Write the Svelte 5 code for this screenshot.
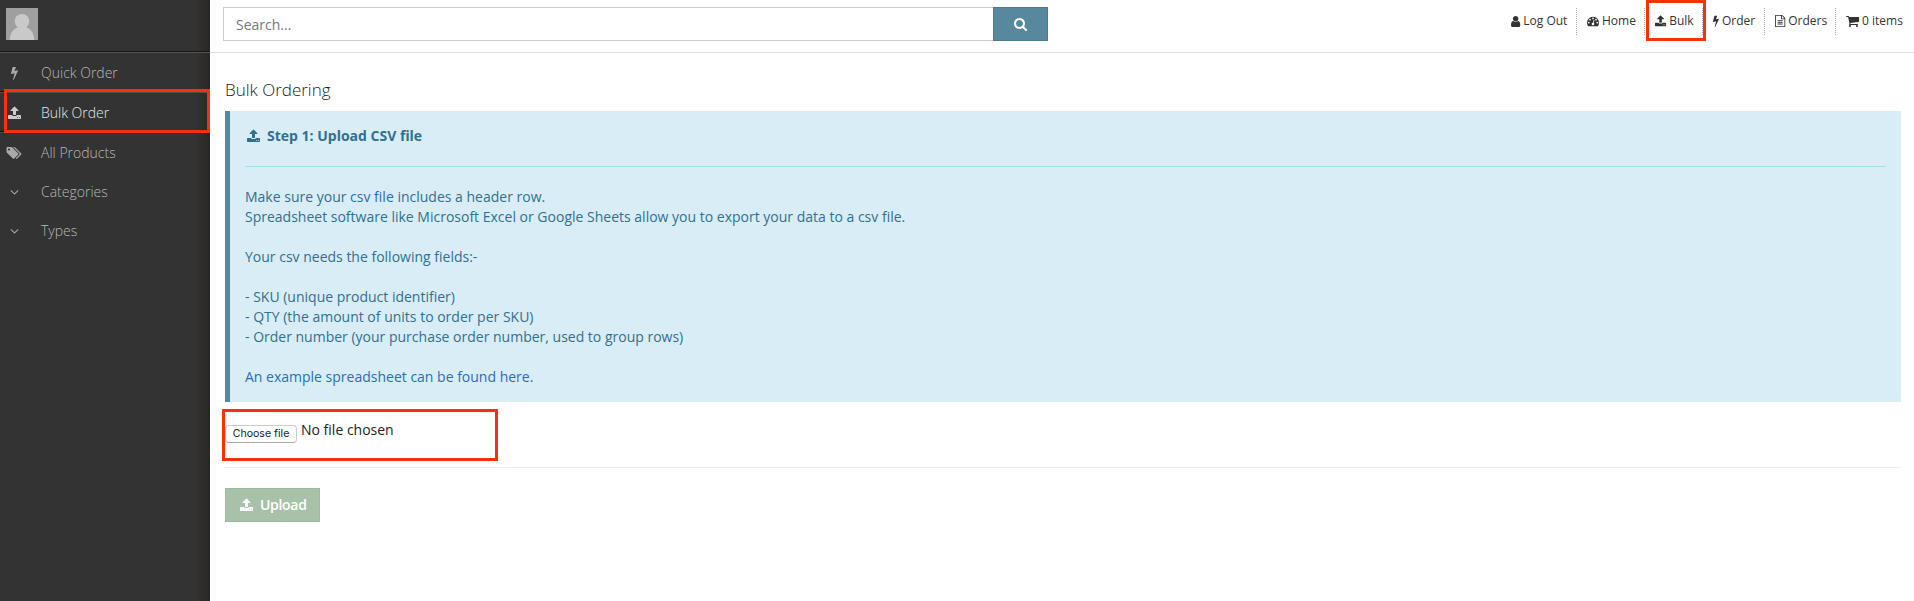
<script>
  const icons = {
    upload: { x: 64, w: 1664, d: 'M1344 1472q0-26-19-45t-45-19-45 19-19 45 19 45 45 19 45-19 19-45zm256 0q0-26-19-45t-45-19-45 19-19 45 19 45 45 19 45-19 19-45zm128-224v320q0 40-28 68t-68 28h-1472q-40 0-68-28t-28-68v-320q0-40 28-68t68-28h427q21 56 70.500 92t110.500 36h256q61 0 110.500-36t70.500-92h427q40 0 68 28t28 68zm-325-648q-17 40-59 40h-256v448q0 26-19 45t-45 19h-256q-26 0-45-19t-19-45v-448h-256q-42 0-59-40-17-39 14-69l448-448q18-19 45-19t45 19l448 448q31 30 14 69z' },
    bolt: { x: 448, w: 896, d: 'M1333 566q18 20 7 44l-540 1157q-13 25-42 25-4 0-14-2-17-5-25.500-19t-4.500-30l197-808-406 101q-4 1-12 1-18 0-31-11-18-15-13-39l201-825q4-14 16-23t28-9h328q19 0 32 12.500t13 29.500q0 8-5 18l-171 463 396-98q8-2 12-2 19 0 34 15z' },
    search: { x: 64, w: 1664, d: 'M1216 832q0-185-131.500-316.500t-316.500-131.500-316.500 131.500-131.500 316.500 131.500 316.500 316.500 131.500 316.500-131.500 131.500-316.500zm512 832q0 52-38 90t-90 38q-54 0-90-38l-343-342q-179 124-399 124-143 0-273.500-55.500t-225-150-150-225-55.500-273.500 55.500-273.500 150-225 225-150 273.500-55.500 273.500 55.500 225 150 150 225 55.500 273.500q0 220-124 399l343 343q37 37 37 90z' },
    user: { x: 256, w: 1280, d: 'M1536 1399q0 109-62.500 187t-150.500 78h-854q-88 0-150.500-78t-62.500-187q0-85 8.500-160.500t31.500-152 58.500-131 94-89 134.500-34.500q131 128 313 128t313-128q76 0 134.500 34.500t94 89 58.500 131 31.500 152 8.500 160.500zm-256-887q0 159-112.500 271.500t-271.500 112.500-271.500-112.500-112.500-271.500 112.500-271.500 271.500-112.500 271.500 112.500 112.500 271.500z' },
    gauge: { x: 0, w: 1792, d: 'M384 1152q0-53-37.500-90.500t-90.500-37.500-90.500 37.500-37.500 90.500 37.500 90.500 90.500 37.500 90.500-37.500 37.500-90.500zm192-448q0-53-37.500-90.500t-90.500-37.500-90.500 37.500-37.500 90.500 37.500 90.500 90.500 37.500 90.500-37.500 37.500-90.500zm428 481l101-382q6-26-7.500-48.500t-38.500-29.500-48 6.500-30 39.500l-101 382q-60 5-107 43.500t-63 98.500q-20 77 20 146t117 89 146-20 89-117q16-60-6-117t-72-91zm660-33q0-53-37.500-90.500t-90.500-37.500-90.500 37.500-37.500 90.500 37.500 90.500 90.500 37.500 90.500-37.500 37.500-90.500zm-640-640q0-53-37.500-90.500t-90.500-37.500-90.500 37.500-37.500 90.500 37.500 90.500 90.500 37.500 90.500-37.500 37.500-90.500zm448 192q0-53-37.500-90.500t-90.500-37.500-90.500 37.500-37.500 90.500 37.500 90.500 90.500 37.500 90.500-37.500 37.500-90.500zm320 448q0 261-141 483-19 29-54 29h-1402q-35 0-54-29-141-221-141-483 0-182 71-348t191-286 286-191 348-71 348 71 286 191 191 286 71 348z' },
    file: { x: 128, w: 1536, d: 'M1596 380q28 28 48 76t20 88v1152q0 40-28 68t-68 28h-1344q-40 0-68-28t-28-68v-1600q0-40 28-68t68-28h896q40 0 88 20t76 48zm-444-244v376h376q-10-29-22-41l-313-313q-12-12-41-22zm384 1528v-1024h-416q-40 0-68-28t-28-68v-416h-768v1536h1280zm-1024-864q0-14 9-23t23-9h704q14 0 23 9t9 23v64q0 14-9 23t-23 9h-704q-14 0-23-9t-9-23v-64zm736 224q14 0 23 9t9 23v64q0 14-9 23t-23 9h-704q-14 0-23-9t-9-23v-64q0-14 9-23t23-9h704zm0 256q14 0 23 9t9 23v64q0 14-9 23t-23 9h-704q-14 0-23-9t-9-23v-64q0-14 9-23t23-9h704z' },
    cart: { x: 64, w: 1664, d: 'M704 1536q0 52-38 90t-90 38-90-38-38-90 38-90 90-38 90 38 38 90zm896 0q0 52-38 90t-90 38-90-38-38-90 38-90 90-38 90 38 38 90zm128-1088v512q0 24-16.500 42.500t-40.500 21.500l-1044 122q13 60 13 70 0 16-24 64h920q26 0 45 19t19 45-19 45-45 19h-1024q-26 0-45-19t-19-45q0-11 8-31.500t16-36 21.500-40 15.500-29.500l-177-823h-204q-26 0-45-19t-19-45 19-45 45-19h256q16 0 28.500 6.500t19.500 15.500 13 24.500 8 26 5.500 29.500 4.500 26h1201q26 0 45 19t19 45z' },
    tags: { x: 0, w: 1835, d: 'M384 448q0-53-37.500-90.500t-90.500-37.500-90.500 37.500-37.500 90.500 37.500 90.500 90.500 37.500 90.500-37.500 37.500-90.500zm1067 576q0 53-37 90l-491 492q-39 37-91 37-53 0-90-37l-715-716q-38-37-64.500-101t-26.500-117v-416q0-52 38-90t90-38h416q53 0 117 26.500t102 64.500l715 714q37 39 37 91zm384 0q0 53-37 90l-491 492q-39 37-91 37-36 0-59-14t-53-45l470-470q37-37 37-90 0-52-37-91l-715-714q-38-38-102-64.500t-117-26.500h224q53 0 117 26.500t102 64.500l715 714q37 39 37 91z' },
    down: { x: 320, w: 1152, d: 'M1395 736q0 13-10 23l-466 466q-10 10-23 10t-23-10l-466-466q-10-10-10-23t10-23l50-50q10-10 23-10t23 10l393 393 393-393q10-10 23-10t23 10l50 50q10 10 10 23z' }
  };
  const side = [
    { icon: 'bolt', label: 'Quick Order' },
    { icon: 'upload', label: 'Bulk Order', active: true },
    { icon: 'tags', label: 'All Products' },
    { icon: 'down', label: 'Categories' },
    { icon: 'down', label: 'Types' }
  ];
  const nav = [
    { icon: 'user', label: 'Log Out', width: 76, size: 13 },
    { icon: 'gauge', label: 'Home', width: 68, size: 12 },
    { icon: 'upload', label: 'Bulk', width: 58, size: 12, marked: true },
    { icon: 'bolt', label: 'Order', width: 62, size: 12 },
    { icon: 'file', label: 'Orders', width: 71, size: 12 },
    { icon: 'cart', label: '0 items', width: 78, size: 14 }
  ];
</script>

{#snippet glyph(name, size)}
  <svg class="glyph" height={size} width={(size * icons[name].w) / 1792} viewBox="{icons[name].x} 0 {icons[name].w} 1792" aria-hidden="true"><path d={icons[name].d} /></svg>
{/snippet}

<div class="page">
  <aside>
    <div class="profile">
      <svg width="32" height="32" viewBox="0 0 32 32" aria-hidden="true">
        <rect width="32" height="32" fill="#9f9f9f" />
        <path fill="#c9c9c9" d="M16 6c4.300 0 7.200 3.200 7.200 7 0 2.800-1.200 5-3.100 6.300C25 20.700 28 25.500 28.300 32H3.700C4 25.500 7 20.700 11.900 19.300 10 18 8.800 15.800 8.800 13c0-3.800 2.900-7 7.200-7z" />
      </svg>
    </div>
    <nav class="menu">
      {#each side as item}
        <a class="entry" class:active={item.active}>
          <span class="slot">{@render glyph(item.icon, 14)}</span>
          <span>{item.label}</span>
          {#if item.active}<i class="mark side-mark"></i>{/if}
        </a>
      {/each}
    </nav>
  </aside>

  <div class="body">
    <header>
      <div class="search">
        <div class="field">Search...</div>
        <button class="go">{@render glyph('search', 14)}</button>
      </div>
      <nav class="links">
        {#each nav as item}
          <a class="link" style:width="{item.width}px">
            {@render glyph(item.icon, item.size)}<span>{item.label}</span>
            {#if item.marked}<i class="mark nav-mark"></i>{/if}
          </a>
        {/each}
      </nav>
    </header>

    <main>
      <h1>Bulk Ordering</h1>
      <section class="info">
        <h2>{@render glyph('upload', 14)}<span>Step 1: Upload CSV file</span></h2>
        <hr />
        <p>Make sure your <a>csv file</a> includes a header row.<br />Spreadsheet software like Microsoft Excel or Google Sheets allow you to export your data to a csv file.</p>
        <p>Your csv needs the following fields:-</p>
        <p>- SKU (unique product identifier)<br />- QTY (the amount of units to order per SKU)<br />- Order number (your purchase order number, used to group rows)</p>
        <p><a>An example spreadsheet can be found here.</a></p>
      </section>
      <div class="chooser">
        <button class="pick">Choose file</button>
        <span>No file chosen</span>
        <i class="mark file-mark"></i>
      </div>
      <button class="upload">{@render glyph('upload', 14)}<span>Upload</span></button>
    </main>
  </div>
</div>

<style>
  :global(body) { background: #fff; overflow: hidden; }
  .page, .page * { box-sizing: border-box; }
  .page { display: flex; height: 601px; font: 14px/20px "Open Sans", sans-serif; color: #333; }
  .glyph { fill: currentColor; flex: none; display: block; overflow: visible; }
  .mark { position: absolute; border: 3px solid #fb3009; pointer-events: none; z-index: 2; }

  aside { width: 210px; flex: none; background: linear-gradient(to right, #333 0, #333 195px, #292725 210px); }
  .profile { height: 52px; padding: 8px 6px; border-bottom: 1px solid #151515; }
  .menu { border-top: 1px solid #555; }
  .entry { position: relative; display: flex; align-items: center; height: 39px; color: #b8b8b8; font-weight: 300; }
  .entry:first-child { height: 38px; padding-top: 2px; }
  .entry.active { height: 41px; padding-top: 2px; color: #e8e8e8; border-top: 1px solid #111; border-bottom: 1px solid #111; box-shadow: inset 0 1px #4d4d4d, 0 1px #4d4d4d; }
  .slot { color: #aaa; width: 29px; margin-right: 12px; display: flex; justify-content: center; }
  .entry.active .slot { color: #ccc; }
  .entry.active + .entry { height: 40px; padding-top: 1px; }
  .side-mark { left: 4px; top: -3px; width: 206px; height: 43.5px; }

  .body { flex: 1; min-width: 0; }
  header { height: 53px; display: flex; justify-content: space-between; border-bottom: 1px solid #ddd; padding: 7px 0 0 13px; }
  .search { display: flex; width: 825px; height: 34px; }
  .field { flex: 1; border: 1px solid #ccc; border-right: 0; padding: 7px 12px; line-height: 20px; color: #777; }
  .go { width: 55px; border: 1px solid #4b7a8f; background: #58889d; color: #fff; display: flex; align-items: center; justify-content: center; padding: 0; }
  .links { display: flex; padding-top: 1px; }
  .link { position: relative; height: 27px; display: flex; align-items: center; gap: 3px; padding: 0 0 1px 10px; font-size: 12px; line-height: 18px; border-right: 1px dotted #aaa; white-space: nowrap; }
  .link:last-child { border: 0; }
  .nav-mark { left: 1px; top: -8px; width: 60px; height: 41px; }

  main { padding: 27px 13px 0 15px; }
  h1 { margin: 0; font-size: 17px; font-weight: 300; line-height: 20px; color: #222; }
  .info { margin-top: 11px; height: 291px; background: #d9edf6; border-left: 5px solid #58889d; padding: 15px; color: #31708f; }
  h2 { display: flex; align-items: center; gap: 7px; margin: 0; padding-left: 2px; font-size: 14px; line-height: 20px; font-weight: 700; }
  hr { border: 0; border-top: 1px solid #9fe1ee; margin: 20px 0; }
  p { margin: 0 0 20px; }
  .info a { color: #2a6db4; }
  .chooser { position: relative; height: 66px; border-bottom: 1px solid #eee; display: flex; gap: 4px; padding-top: 18px; color: #222; }
  .pick { width: 72px; height: 18px; margin-top: 5px; padding: 0 0 1px; background: #fff; border: 1px solid #ccc; border-bottom-color: #aaa; border-radius: 4px; font: 10.6px/15px Inter, sans-serif; color: #222; }
  .file-mark { left: -3px; top: 7px; width: 276px; height: 52px; }
  .upload { display: flex; align-items: center; gap: 7px; width: 95px; height: 34px; margin-top: 20px; padding: 0 0 0 14px; background: #a8c2a9; border: 1px solid #9dba9f; color: #fff; font: 600 14px/20px "Open Sans", sans-serif; letter-spacing: -0.3px; }
</style>
